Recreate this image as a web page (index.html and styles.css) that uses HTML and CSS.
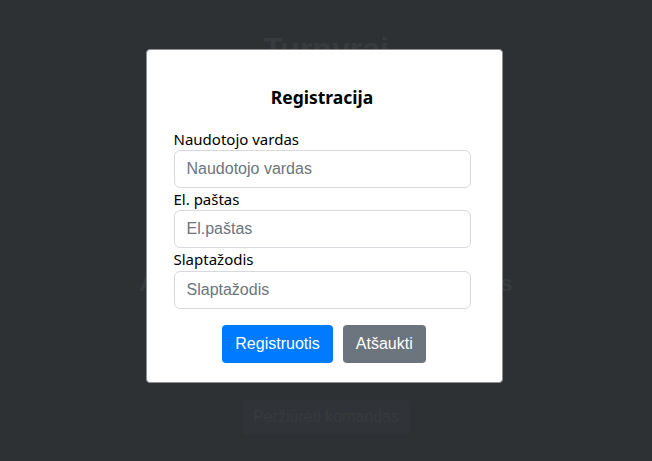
FILE: index.html
```html
<!DOCTYPE html>
<html lang="lt">
<head>
<meta charset="utf-8">
<title>Registracija</title>
<link rel="stylesheet" href="styles.css">
</head>
<body>
<main class="page">
  <h1 class="page-title">Turnyrai</h1>
  <p class="page-lead">Aktyvūs turnyrai ir visos komandos</p>
  <button class="page-btn" type="button">Peržiūrėti komandas</button>
</main>
<div class="overlay">
  <form class="modal">
    <h2 class="modal-title">Registracija</h2>
    <label class="field-label" for="user">Naudotojo vardas</label>
    <input class="field-input" id="user" type="text" placeholder="Naudotojo vardas">
    <label class="field-label" for="email">El. paštas</label>
    <input class="field-input" id="email" type="email" placeholder="El.paštas">
    <label class="field-label field-label-last" for="pass">Slaptažodis</label>
    <input class="field-input" id="pass" type="password" placeholder="Slaptažodis">
    <div class="actions">
      <button class="btn btn-primary" type="button">Registruotis</button>
      <button class="btn btn-secondary" type="button">Atšaukti</button>
    </div>
  </form>
</div>
</body>
</html>
```
FILE: styles.css
```css
* { box-sizing: border-box; }
html, body { height: 100%; }
body {
  margin: 0;
  background: #2e3133;
  font-family: "Liberation Sans", Arial, sans-serif;
  overflow: hidden;
}
.page {
  display: flex;
  flex-direction: column;
  align-items: center;
  padding-top: 31px;
  color: #383b3d;
}
.page-title {
  margin: 0;
  font-size: 32px;
  line-height: 36px;
  font-weight: bold;
}
.page-lead {
  margin: 204px 0 0;
  font-size: 22px;
  line-height: 26px;
  font-weight: bold;
}
.page-btn {
  margin-top: 103px;
  width: 168px;
  height: 34px;
  border: none;
  border-radius: 4px;
  background: #303439;
  color: #393a3b;
  font-family: "Liberation Sans", Arial, sans-serif;
  font-size: 16px;
}
.overlay {
  position: fixed;
  inset: 0;
  display: flex;
  justify-content: center;
  align-items: flex-start;
  padding: 49px 4px 0 0;
}
.modal {
  width: 357px;
  background: #fff;
  border: 1px solid #8d8f90;
  border-radius: 4px;
  padding: 34px 31px 19px 27px;
  display: flex;
  flex-direction: column;
}
.modal-title {
  margin: 0 0 18px;
  text-align: center;
  font-family: "Noto Sans", "Open Sans", sans-serif;
  font-size: 17.5px;
  line-height: 26px;
  font-weight: bold;
  color: #000;
}
.field-label {
  font-family: "Noto Sans", "Open Sans", sans-serif;
  font-size: 15px;
  line-height: 22px;
  color: #000;
}
.field-label-last { line-height: 23px; }
.field-input {
  height: 38px;
  width: 100%;
  border: 1px solid #d6d9de;
  border-radius: 6px;
  padding: 0 12px;
  font-family: "Liberation Sans", Arial, sans-serif;
  font-size: 16px;
  color: #495057;
  background: #fff;
  outline: none;
}
.field-input::placeholder { color: #6c757d; }
.actions {
  display: flex;
  justify-content: center;
  gap: 10px;
  margin-top: 16px;
  padding-left: 4px;
}
.btn {
  height: 38px;
  border: none;
  border-radius: 4px;
  padding: 0 13px;
  color: #fff;
  font-family: "Liberation Sans", Arial, sans-serif;
  font-size: 16px;
}
.btn-primary { background: #007bff; }
.btn-secondary { background: #6c757d; }
```
